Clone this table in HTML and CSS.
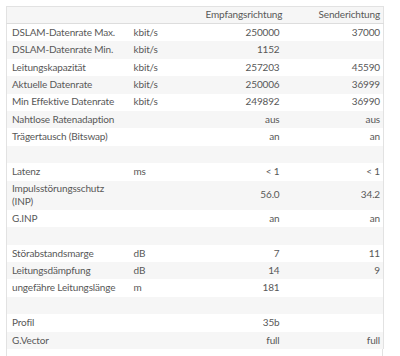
FILE: index.html
```html
<!DOCTYPE html>
<html lang="de">
<head>
<meta charset="utf-8">
<link rel="stylesheet" href="styles.css">
</head>
<body>
<table class="dsl">
  <colgroup>
    <col class="c-name"><col class="c-unit"><col class="c-down"><col class="c-up">
  </colgroup>
  <thead>
    <tr><th></th><th></th><th class="num">Empfangsrichtung</th><th class="num">Senderichtung</th></tr>
  </thead>
  <tbody>
    <tr><td>DSLAM-Datenrate Max.</td><td>kbit/s</td><td class="num">250000</td><td class="num">37000</td></tr>
    <tr><td>DSLAM-Datenrate Min.</td><td>kbit/s</td><td class="num">1152</td><td class="num"></td></tr>
    <tr><td>Leitungskapazität</td><td>kbit/s</td><td class="num">257203</td><td class="num">45590</td></tr>
    <tr><td>Aktuelle Datenrate</td><td>kbit/s</td><td class="num">250006</td><td class="num">36999</td></tr>
    <tr><td>Min Effektive Datenrate</td><td>kbit/s</td><td class="num">249892</td><td class="num">36990</td></tr>
    <tr><td>Nahtlose Ratenadaption</td><td></td><td class="num">aus</td><td class="num">aus</td></tr>
    <tr><td>Trägertausch (Bitswap)</td><td></td><td class="num">an</td><td class="num">an</td></tr>
    <tr class="blank"><td colspan="4"></td></tr>
    <tr><td>Latenz</td><td>ms</td><td class="num">&lt; 1</td><td class="num">&lt; 1</td></tr>
    <tr class="tall"><td>Impulsstörungsschutz (INP)</td><td></td><td class="num">56.0</td><td class="num">34.2</td></tr>
    <tr><td>G.INP</td><td></td><td class="num">an</td><td class="num">an</td></tr>
    <tr class="blank"><td colspan="4"></td></tr>
    <tr><td>Störabstandsmarge</td><td>dB</td><td class="num">7</td><td class="num">11</td></tr>
    <tr><td>Leitungsdämpfung</td><td>dB</td><td class="num">14</td><td class="num">9</td></tr>
    <tr><td>ungefähre Leitungslänge</td><td>m</td><td class="num">181</td><td class="num"></td></tr>
    <tr class="blank"><td colspan="4"></td></tr>
    <tr><td>Profil</td><td></td><td class="num">35b</td><td class="num"></td></tr>
    <tr><td>G.Vector</td><td></td><td class="num">full</td><td class="num">full</td></tr>
  </tbody>
</table>
<div class="tail"></div>
</body>
</html>
```
FILE: styles.css
```css
html, body {
  margin: 0;
  padding: 0;
  background: #fff;
}
body {
  padding: 6px 0 0 6px;
  font-family: Lato, "Liberation Sans", sans-serif;
  font-size: 10px;
  letter-spacing: -0.15px;
  color: #585858;
}
.dsl {
  width: 377px;
  table-layout: fixed;
  border-collapse: collapse;
  border: 1px solid #e2e2e2;
  border-bottom: none;
}
.c-name { width: 122px; }
.c-unit { width: 72px; }
.c-down { width: 82px; }
.c-up { width: 101px; }
.dsl th, .dsl td {
  height: 17.4px;
  padding: 0 3px 0 5px;
  text-align: left;
  font-weight: normal;
  line-height: 13.6px;
  vertical-align: middle;
  white-space: normal;
}
.dsl thead tr {
  background: #f6f6f6;
  border-bottom: 1px solid #dddddd;
}
.dsl th { height: 16px; }
.dsl .num { text-align: right; }
.dsl tbody tr:nth-child(even) { background: #f6f6f6; }
.dsl tr.tall td { height: 29.4px; }
.tail {
  width: 377px;
  height: 40px;
  box-sizing: border-box;
  border-left: 1px solid #e2e2e2;
  border-right: 1px solid #e2e2e2;
}
```
